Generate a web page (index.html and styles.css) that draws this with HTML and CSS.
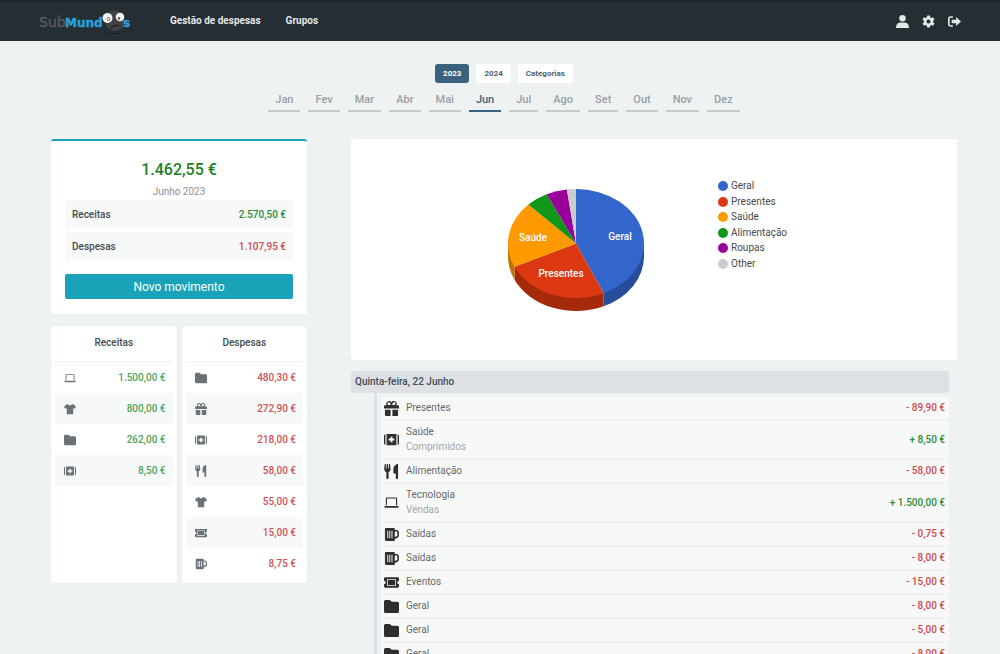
FILE: index.html
```html
<!DOCTYPE html>
<html lang="pt">
<head>
<meta charset="utf-8">
<meta name="viewport" content="width=device-width, initial-scale=1">
<title>SubMundos - Gestão de despesas</title>
<link rel="stylesheet" href="styles.css">
</head>
<body>
<svg class="sprite" aria-hidden="true">
  <symbol id="laptop" viewBox="0 0 16 16"><path fill-rule="evenodd" d="M2 11V4a1.400 1.400 0 0 1 1.400-1.400h9.200A1.400 1.400 0 0 1 14 4v7h-1.200V3.800H3.200V11zM.3 11.800h15.400v.4a1.600 1.600 0 0 1-1.600 1.500H1.900A1.600 1.600 0 0 1 .3 12.200z"/></symbol>
  <symbol id="shirt" viewBox="0 0 16 16"><path d="M5.300 1.300c.6 1.300 1.500 1.900 2.700 1.900s2.100-.6 2.700-1.900c1.500.3 2.700.8 3.600 1.700L16 5.600l-2.300 2.200-1.400-.8V14a1 1 0 0 1-1 1H4.700a1 1 0 0 1-1-1V7l-1.400.8L0 5.600 1.700 3c.9-.9 2.100-1.400 3.600-1.700z"/></symbol>
  <symbol id="folder" viewBox="0 0 16 16"><path d="M0 2.600A1.600 1.600 0 0 1 1.600 1h4.200c1.200 0 1.700 2 2.900 2h5.700A1.600 1.600 0 0 1 16 4.600v8.800a1.600 1.600 0 0 1-1.600 1.600H1.600A1.600 1.600 0 0 1 0 13.400z"/></symbol>
  <symbol id="aid" viewBox="0 0 16 16"><path fill-rule="evenodd" d="M0 3.600 1.500 2v12L0 12.400zM2.800 2h10.400v12H2.800zM14.500 2 16 3.600v8.800L14.500 14zM7 5v2H5v2h2v2h2V9h2V7H9V5z"/></symbol>
  <symbol id="gift" viewBox="0 0 16 16"><path fill-rule="evenodd" d="M1 4.500h1.800A2.900 2.900 0 0 1 8 1.600a2.900 2.900 0 0 1 5.200 2.900H15a1 1 0 0 1 1 1V8H0V5.500a1 1 0 0 1 1-1zM5.200 1.300a1.500 1.500 0 0 0 0 3H7.300C6.900 2.500 6.300 1.300 5.200 1.300zm5.600 0c-1.100 0-1.700 1.200-2.100 3h2.100a1.500 1.500 0 0 0 0-3zM1 9.200h6V16H2a1 1 0 0 1-1-1zM9 9.200h6V15a1 1 0 0 1-1 1H9z"/></symbol>
  <symbol id="fork" viewBox="0 0 16 16"><path d="M.8 0h1.100l.3 5h.5L3 0h1.200l.3 5H5l.3-5h1.100L7 5.200C7 7 6 8 4.900 8.500V15a1.200 1.200 0 0 1-2.400 0V8.500C1.200 8 .3 7 .3 5.200zM15 0v15a1.200 1.200 0 0 1-2.400 0v-5H10V6c0-3.500 2.300-6 5-6z"/></symbol>
  <symbol id="ticket" viewBox="0 0 16 16"><path fill-rule="evenodd" d="M0 4A1.400 1.400 0 0 1 1.400 2.500h13.200A1.400 1.400 0 0 1 16 4v2.200a1.800 1.800 0 0 0 0 3.600V12a1.400 1.400 0 0 1-1.400 1.500H1.400A1.400 1.400 0 0 1 0 12V9.800a1.800 1.800 0 0 0 0-3.600zM3.200 4.500v7h9.600v-7zM4 5.300h8v5.400H4z"/></symbol>
  <symbol id="beer" viewBox="0 0 16 16"><path fill-rule="evenodd" d="M1 2a1 1 0 0 1 1-1h8.500a1 1 0 0 1 1 1v1.200h1.400A3 3 0 0 1 16 6.200v2.600c0 1.300-.6 2.200-1.700 2.700l-2.800 1.200V14a1 1 0 0 1-1 1H3a2 2 0 0 1-2-2zM11.500 4.800v5.900l2.200-1c.4-.2.600-.5.600-.9V6.200a1.300 1.300 0 0 0-1.300-1.400zM3.500 4v8h1V4zM5.700 4v8h1V4zM8 4v8h1V4z"/></symbol>
  <symbol id="user" viewBox="0 0 16 16"><circle cx="8" cy="4" r="4"/><path d="M0 15.500C0 11.500 2.300 9.200 6 9.200h4c3.700 0 6 2.300 6 6.300a.5.500 0 0 1-.5.500H.5a.5.500 0 0 1-.5-.5z"/></symbol>
  <symbol id="gear" viewBox="0 0 16 16"><path fill-rule="evenodd" d="M6.400.5h3.200l.5 2.300 1.400.8 2.200-.7 1.600 2.800-1.700 1.500v1.600l1.700 1.500-1.600 2.800-2.200-.7-1.400.8-.5 2.300H6.400l-.5-2.300-1.400-.8-2.200.7-1.600-2.800 1.700-1.500V7.200L.7 5.700l1.600-2.800 2.200.7 1.400-.8zM8 5.500a2.500 2.500 0 1 0 0 5 2.500 2.500 0 0 0 0-5z"/></symbol>
  <symbol id="exit" viewBox="0 0 16 16"><path d="M6 1.500v2H3a1 1 0 0 0-1 1v7a1 1 0 0 0 1 1h3v2H3a3 3 0 0 1-3-3v-7a3 3 0 0 1 3-3zM10 2.600l6 5.400-6 5.400v-3.200H5.500a1 1 0 0 1-1-1V6.800a1 1 0 0 1 1-1H10z"/></symbol>
</svg>

<header class="navbar">
  <a class="logo" href="#" aria-label="SubMundos">
    <svg width="94" height="28" viewBox="0 0 94 28">
      <text class="logo-sub" x="0" y="19">Sub</text>
      <text class="logo-mund" x="26" y="19">Mund</text>
      <circle cx="76" cy="13" r="10" fill="#414345"/>
      <path d="M70 5l1-3 2 2 2-3 1 3 3-2v3" fill="#414345"/>
      <path d="M72 20q3-4 8-2" fill="none" stroke="#202427" stroke-width="1.500"/>
      <circle cx="68.500" cy="10" r="5" fill="#f4f4f4"/>
      <circle cx="81" cy="9" r="4.300" fill="#f4f4f4"/>
      <circle cx="69.500" cy="11" r="1.900" fill="#777"/><circle cx="69.500" cy="11" r=".9" fill="#fff"/>
      <circle cx="80" cy="10.500" r="1.300" fill="#555"/>
      <text class="logo-mund" x="84" y="19">s</text>
      <path d="M68 25.500h14" stroke="#171b1d" stroke-dasharray="3 1"/>
    </svg>
  </a>
  <nav class="menu"><a href="#">Gestão de despesas</a><a href="#">Grupos</a></nav>
  <div class="tools">
    <a href="#" aria-label="Perfil"><svg class="icon"><use href="#user"/></svg></a>
    <a href="#" aria-label="Definições"><svg class="icon"><use href="#gear"/></svg></a>
    <a href="#" aria-label="Sair"><svg class="icon"><use href="#exit"/></svg></a>
  </div>
</header>

<main class="page">
  <div class="years">
    <button class="active">2023</button><button>2024</button><button>Categorias</button>
  </div>
  <nav class="months">
    <a href="#">Jan</a><a href="#">Fev</a><a href="#">Mar</a><a href="#">Abr</a><a href="#">Mai</a><a href="#" class="active">Jun</a><a href="#">Jul</a><a href="#">Ago</a><a href="#">Set</a><a href="#">Out</a><a href="#">Nov</a><a href="#">Dez</a>
  </nav>

  <div class="columns">
    <aside class="side">
      <section class="card summary">
        <h1>1.462,55 €</h1>
        <p class="period">Junho 2023</p>
        <dl class="totals">
          <div><dt>Receitas</dt><dd class="plus">2.570,50 €</dd></div>
          <div><dt>Despesas</dt><dd class="minus">1.107,95 €</dd></div>
        </dl>
        <button class="new">Novo movimento</button>
      </section>

      <div class="pair">
        <section class="card group income">
          <h2>Receitas</h2>
          <ul>
            <li><svg class="icon"><use href="#laptop"/></svg>1.500,00 €</li>
            <li><svg class="icon"><use href="#shirt"/></svg>800,00 €</li>
            <li><svg class="icon"><use href="#folder"/></svg>262,00 €</li>
            <li><svg class="icon"><use href="#aid"/></svg>8,50 €</li>
          </ul>
        </section>
        <section class="card group expense">
          <h2>Despesas</h2>
          <ul>
            <li><svg class="icon"><use href="#folder"/></svg>480,30 €</li>
            <li><svg class="icon"><use href="#gift"/></svg>272,90 €</li>
            <li><svg class="icon"><use href="#aid"/></svg>218,00 €</li>
            <li><svg class="icon"><use href="#fork"/></svg>58,00 €</li>
            <li><svg class="icon"><use href="#shirt"/></svg>55,00 €</li>
            <li><svg class="icon"><use href="#ticket"/></svg>15,00 €</li>
            <li><svg class="icon"><use href="#beer"/></svg>8,75 €</li>
          </ul>
        </section>
      </div>
    </aside>

    <div class="content">
      <section class="card chart">
        <svg class="pie" width="136" height="124" viewBox="0 0 136 124" role="img" aria-label="Despesas por categoria">
          <path fill="#264d99" d="M136 55.500v13A68 54.500 0 0 1 95.600 118.300v-13z"/>
          <path fill="#a52a0c" d="M95.600 105.300v13A68 54.500 0 0 1 6.500 91.800v-13z"/>
          <path fill="#bf7300" d="M6.500 78.800v13A68 54.500 0 0 1 0 68.500v-13z"/>
          <path fill="#3366cc" d="M68 55.500V1A68 54.500 0 0 1 95.600 105.300z"/>
          <path fill="#dc3912" d="M68 55.500 95.600 105.300A68 54.500 0 0 1 6.500 78.800z"/>
          <path fill="#ff9900" d="M68 55.500 6.500 78.800A68 54.500 0 0 1 20.400 16.600z"/>
          <path fill="#109618" d="M68 55.500 20.400 16.600A68 54.500 0 0 1 38.600 6.300z"/>
          <path fill="#990099" d="M68 55.500 38.600 6.300A68 54.500 0 0 1 58.900 1.500z"/>
          <path fill="#cccccc" d="M68 55.500 58.900 1.500A68 54.500 0 0 1 68 1z"/>
          <text x="112" y="52">Geral</text>
          <text x="53" y="89">Presentes</text>
          <text x="25" y="53">Saúde</text>
        </svg>
        <ul class="legend">
          <li class="c1">Geral</li><li class="c2">Presentes</li><li class="c3">Saúde</li><li class="c4">Alimentação</li><li class="c5">Roupas</li><li class="c6">Other</li>
        </ul>
      </section>

      <section class="day">
        <h2>Quinta-feira, 22 Junho</h2>
        <ul class="moves">
          <li><svg class="icon"><use href="#gift"/></svg><p>Presentes</p><span class="minus">- 89,90 €</span></li>
          <li><svg class="icon"><use href="#aid"/></svg><p>Saúde<small>Comprimidos</small></p><span class="plus">+ 8,50 €</span></li>
          <li><svg class="icon"><use href="#fork"/></svg><p>Alimentação</p><span class="minus">- 58,00 €</span></li>
          <li><svg class="icon"><use href="#laptop"/></svg><p>Tecnologia<small>Vendas</small></p><span class="plus">+ 1.500,00 €</span></li>
          <li><svg class="icon"><use href="#beer"/></svg><p>Saídas</p><span class="minus">- 0,75 €</span></li>
          <li><svg class="icon"><use href="#beer"/></svg><p>Saídas</p><span class="minus">- 8,00 €</span></li>
          <li><svg class="icon"><use href="#ticket"/></svg><p>Eventos</p><span class="minus">- 15,00 €</span></li>
          <li><svg class="icon"><use href="#folder"/></svg><p>Geral</p><span class="minus">- 8,00 €</span></li>
          <li><svg class="icon"><use href="#folder"/></svg><p>Geral</p><span class="minus">- 5,00 €</span></li>
          <li><svg class="icon"><use href="#folder"/></svg><p>Geral</p><span class="minus">- 8,00 €</span></li>
        </ul>
      </section>
    </div>
  </div>
</main>
</body>
</html>
```

FILE: styles.css
```css
* { box-sizing: border-box; }
body {
  margin: 0;
  background: #eef2f3;
  color: #454b50;
  font: 10px/14px Roboto, sans-serif;
}
h1, h2, p, ul, dl, dd { margin: 0; padding: 0; }
ul { list-style: none; }
a { color: inherit; text-decoration: none; }
button { border: 0; font-family: inherit; cursor: pointer; }
.sprite { display: none; }
.icon { display: block; width: 12px; height: 12px; fill: currentColor; flex: none; }
.plus { color: #2a8a33; }
.minus { color: #cf4a50; }

.navbar {
  display: flex;
  align-items: center;
  height: 41px;
  padding: 0 39px;
  background: #242e33;
  border-top: 2px solid #1f2527;
  color: #e4e7e8;
}
.logo { display: flex; width: 94px; margin-right: 37px; }
.logo-sub { font: 14px "DejaVu Sans", sans-serif; fill: #55595c; stroke: #55595c; stroke-width: 0.5; }
.logo-mund { font: bold 12px "DejaVu Sans", sans-serif; fill: #2a9fdc; stroke: #2a9fdc; stroke-width: 0.4; }
.menu { display: flex; gap: 25px; padding-bottom: 1px; font-size: 10px; font-weight: 700; }
.tools { display: flex; gap: 13px; margin-left: auto; padding-bottom: 1px; }
.tools .icon { width: 13px; height: 13px; }

.page { padding: 23px 43px 0 51px; }
.years { display: flex; justify-content: center; gap: 7px; }
.years button {
  height: 19px;
  padding: 0 8px;
  border-radius: 3px;
  background: #fff;
  color: #4d6273;
  font-size: 8px;
  font-weight: 700;
}
.years .active { background: #3a617e; color: #fff; }
.months {
  display: flex;
  justify-content: center;
  gap: 8px;
  margin-top: 7px;
  color: #9b9fa2;
  font-size: 11px;
  font-weight: 500;
}
.months a { padding: 3px 7px; border-bottom: 2px solid #c6cacd; }
.months .active { color: #3a617e; border-color: #3a617e; }

.columns { display: grid; grid-template-columns: 256fr 606fr; gap: 44px; margin-top: 27px; }
.card { background: #fff; border-radius: 3px; }
.summary {
  padding: 18px 14px 15px;
  border-top: 2px solid #1fa2bd;
  text-align: center;
}
.summary h1 { color: #208026; font-size: 16px; font-weight: 500; line-height: 22px; }
.period { margin-top: 4px; color: #8b9196; }
.totals { display: grid; gap: 3px; margin-top: 1px; }
.totals div {
  display: flex;
  justify-content: space-between;
  align-items: center;
  height: 29px;
  padding: 0 7px;
  background: #f7f8f8;
  font-weight: 500;
}
.new {
  width: 100%;
  height: 25px;
  margin-top: 13px;
  border-radius: 2px;
  background: #1aa2b8;
  color: #fff;
  font-size: 12px;
}

.pair { display: grid; grid-template-columns: 1fr 1fr; gap: 5px; margin-top: 12px; }
.group { padding: 0 4px 4px; box-shadow: 0 0 1px #cfd4d6; }
.group h2 {
  height: 36px;
  border-bottom: 1px solid #f0f2f2;
  font-size: 10px;
  font-weight: 500;
  line-height: 33px;
  text-align: center;
}
.group li {
  display: flex;
  justify-content: space-between;
  align-items: center;
  height: 31px;
  padding: 0 7px 0 9px;
  font-weight: 500;
}
.group li:nth-child(even) { background: #f7f8f8; }
.group .icon { color: #697279; }
.income li { color: #4ba35a; }
.expense li { color: #d05257; }

.chart {
  display: flex;
  align-items: flex-start;
  height: 221px;
  padding-left: 157px;
}
.pie { margin-top: 49px; }
.pie text { fill: #fff; font: 500 10px Roboto, sans-serif; text-anchor: middle; }
.legend {
  display: flex;
  flex-direction: column;
  justify-content: space-between;
  height: 92px;
  margin: 40px 0 0 74px;
  color: #4a4a4a;
}
.legend li { display: flex; align-items: center; gap: 3px; }
.legend li::before { content: ""; width: 10px; height: 10px; border-radius: 50%; background: var(--dot); }
.c1 { --dot: #3366cc; }
.c2 { --dot: #dc3912; }
.c3 { --dot: #ff9900; }
.c4 { --dot: #109618; }
.c5 { --dot: #990099; }
.c6 { --dot: #cccccc; }

.day { margin: 11px 8px 0 0; }
.day h2 {
  padding: 4px;
  border-radius: 2px;
  background: #dde1e6;
  font-size: 10px;
  font-weight: 500;
  line-height: 14px;
}
.moves {
  display: grid;
  gap: 2px;
  margin-left: 23px;
  padding: 4px 0 0 4px;
  border-left: 3px solid #dbdfe6;
}
.moves li {
  display: flex;
  align-items: center;
  gap: 7px;
  min-height: 22px;
  padding: 4px 4px 4px 3px;
  background: #f7f9f9;
}
.moves .icon { width: 15px; height: 15px; margin: -1px 0; color: #2c2e2f; }
.moves p { flex: 1; color: #65696c; }
.moves small { display: block; margin-top: 1px; color: #a3a6a8; font-size: 10px; }
.moves span { font-weight: 500; }
```
